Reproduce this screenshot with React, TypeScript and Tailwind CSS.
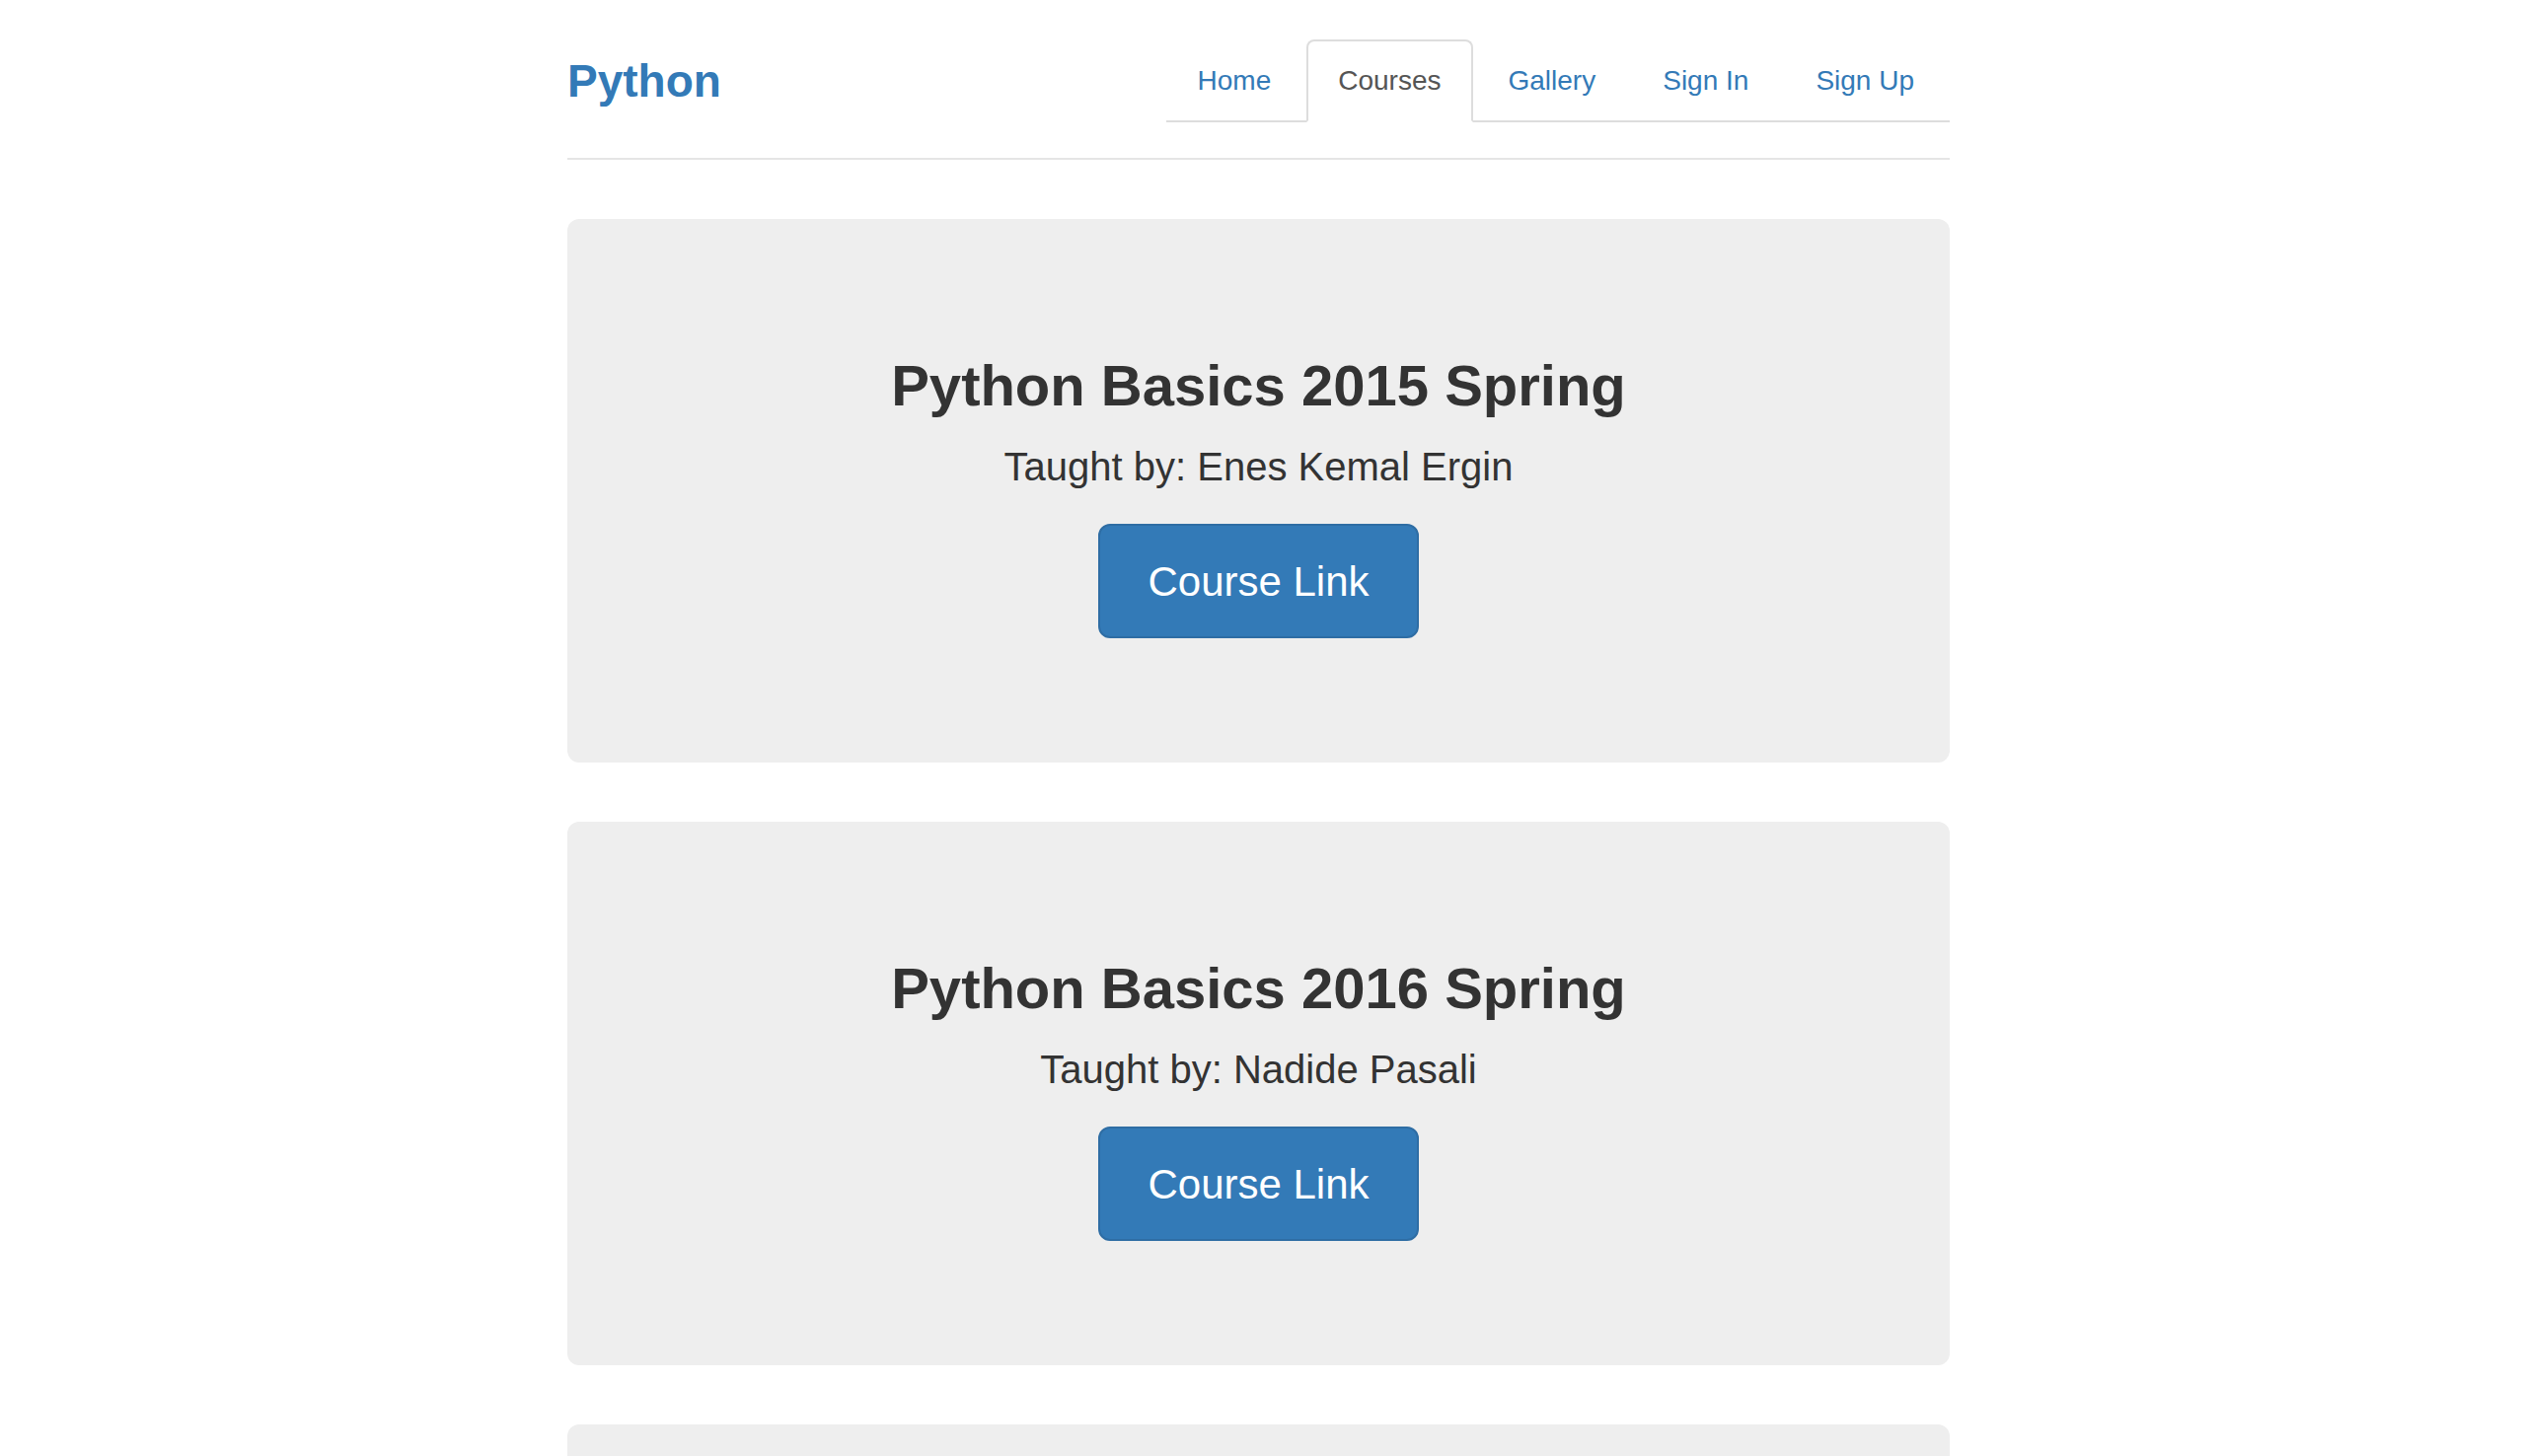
import React from 'react';

const navItems = ['Home', 'Courses', 'Gallery', 'Sign In', 'Sign Up'];

const courses = [
  { title: 'Python Basics 2015 Spring', teacher: 'Enes Kemal Ergin' },
  { title: 'Python Basics 2016 Spring', teacher: 'Nadide Pasali' },
  { title: 'Python Basics 2017 Spring', teacher: 'Enes Kemal Ergin' },
];

export default function App() {
  const active = 'Courses';

  return (
    <div
      className="h-screen overflow-hidden bg-white text-[#333]"
      style={{ fontFamily: '"Liberation Sans", Arial, Helvetica, sans-serif' }}
    >
      <div className="ml-[575px] w-[1401px]">
        {/* Header */}
        <div className="flex items-center justify-between pt-[40px] pb-[36px] border-b-2 border-[#e5e5e5]">
          <h3 className="text-[46px] font-bold leading-none text-[#337ab7]">Python</h3>
          <ul className="flex border-b-2 border-[#ddd]">
            {navItems.map((item) => (
              <li key={item} className="mr-[4px] -mb-[2px]">
                <a
                  href="#"
                  className={
                    item === active
                      ? 'block px-[30px] py-[20px] text-[28px] leading-[40px] text-[#555] bg-white border-2 border-[#ddd] border-b-white rounded-t-[8px]'
                      : 'block px-[30px] py-[20px] text-[28px] leading-[40px] text-[#337ab7] border-2 border-transparent rounded-t-[8px]'
                  }
                >
                  {item}
                </a>
              </li>
            ))}
          </ul>
        </div>

        {/* Courses */}
        <div className="pt-[60px] flex flex-col gap-[60px] pb-[60px]">
          {courses.map((course) => (
            <div
              key={course.title}
              className="flex flex-col items-center bg-[#eee] rounded-[12px] pt-[136px] pb-[126px]"
            >
              <h2 className="text-[58px] font-bold leading-[66px] text-[#333]">{course.title}</h2>
              <p className="mt-[21px] text-[40px] leading-[56px] text-[#333]">Taught by: {course.teacher}</p>
              <a
                href="#"
                className="mt-[30px] flex items-center justify-center w-[325px] h-[116px] rounded-[12px] bg-[#337ab7] border-2 border-[#2e6da4] text-white text-[42px]"
              >
                Course Link
              </a>
            </div>
          ))}
        </div>
      </div>
    </div>
  );
}
